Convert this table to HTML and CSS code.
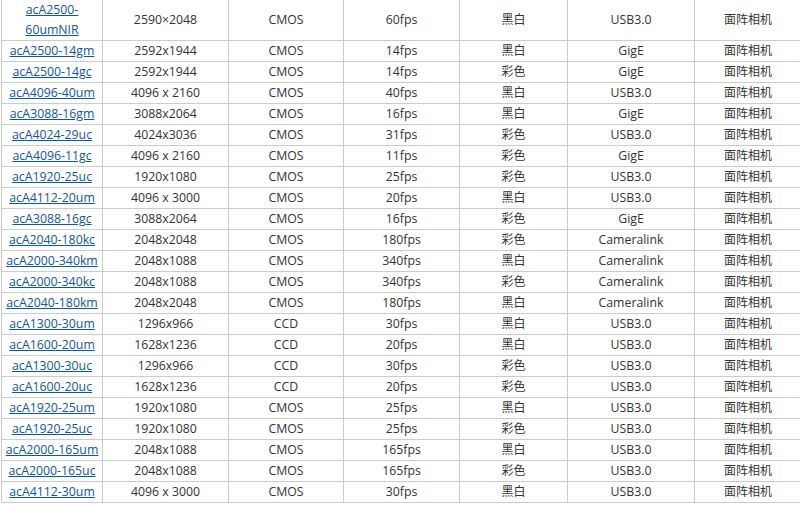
FILE: index.html
```html
<!DOCTYPE html>
<html lang="zh-CN">
<head>
<meta charset="utf-8">
<title>相机型号</title>
<link rel="stylesheet" href="styles.css">
</head>
<body>
<table class="spec">
<colgroup>
<col class="c1"><col class="c2"><col class="c3"><col class="c4"><col class="c5"><col class="c6"><col class="c7">
</colgroup>
<tbody>
<tr><td><a href="#">acA2500-60umNIR</a></td><td>2590×2048</td><td>CMOS</td><td>60fps</td><td class="zh">黑白</td><td>USB3.0</td><td class="zh">面阵相机</td></tr>
<tr><td><a href="#">acA2500-14gm</a></td><td>2592x1944</td><td>CMOS</td><td>14fps</td><td class="zh">黑白</td><td>GigE</td><td class="zh">面阵相机</td></tr>
<tr><td><a href="#">acA2500-14gc</a></td><td>2592x1944</td><td>CMOS</td><td>14fps</td><td class="zh">彩色</td><td>GigE</td><td class="zh">面阵相机</td></tr>
<tr><td><a href="#">acA4096-40um</a></td><td>4096 x 2160</td><td>CMOS</td><td>40fps</td><td class="zh">黑白</td><td>USB3.0</td><td class="zh">面阵相机</td></tr>
<tr><td><a href="#">acA3088-16gm</a></td><td>3088x2064</td><td>CMOS</td><td>16fps</td><td class="zh">黑白</td><td>GigE</td><td class="zh">面阵相机</td></tr>
<tr><td><a href="#">acA4024-29uc</a></td><td>4024x3036</td><td>CMOS</td><td>31fps</td><td class="zh">彩色</td><td>USB3.0</td><td class="zh">面阵相机</td></tr>
<tr><td><a href="#">acA4096-11gc</a></td><td>4096 x 2160</td><td>CMOS</td><td>11fps</td><td class="zh">彩色</td><td>GigE</td><td class="zh">面阵相机</td></tr>
<tr><td><a href="#">acA1920-25uc</a></td><td>1920x1080</td><td>CMOS</td><td>25fps</td><td class="zh">彩色</td><td>USB3.0</td><td class="zh">面阵相机</td></tr>
<tr><td><a href="#">acA4112-20um</a></td><td>4096 x 3000</td><td>CMOS</td><td>20fps</td><td class="zh">黑白</td><td>USB3.0</td><td class="zh">面阵相机</td></tr>
<tr><td><a href="#">acA3088-16gc</a></td><td>3088x2064</td><td>CMOS</td><td>16fps</td><td class="zh">彩色</td><td>GigE</td><td class="zh">面阵相机</td></tr>
<tr><td><a href="#">acA2040-180kc</a></td><td>2048x2048</td><td>CMOS</td><td>180fps</td><td class="zh">彩色</td><td>Cameralink</td><td class="zh">面阵相机</td></tr>
<tr><td><a href="#">acA2000-340km</a></td><td>2048x1088</td><td>CMOS</td><td>340fps</td><td class="zh">黑白</td><td>Cameralink</td><td class="zh">面阵相机</td></tr>
<tr><td><a href="#">acA2000-340kc</a></td><td>2048x1088</td><td>CMOS</td><td>340fps</td><td class="zh">彩色</td><td>Cameralink</td><td class="zh">面阵相机</td></tr>
<tr><td><a href="#">acA2040-180km</a></td><td>2048x2048</td><td>CMOS</td><td>180fps</td><td class="zh">黑白</td><td>Cameralink</td><td class="zh">面阵相机</td></tr>
<tr><td><a href="#">acA1300-30um</a></td><td>1296x966</td><td>CCD</td><td>30fps</td><td class="zh">黑白</td><td>USB3.0</td><td class="zh">面阵相机</td></tr>
<tr><td><a href="#">acA1600-20um</a></td><td>1628x1236</td><td>CCD</td><td>20fps</td><td class="zh">黑白</td><td>USB3.0</td><td class="zh">面阵相机</td></tr>
<tr><td><a href="#">acA1300-30uc</a></td><td>1296x966</td><td>CCD</td><td>30fps</td><td class="zh">彩色</td><td>USB3.0</td><td class="zh">面阵相机</td></tr>
<tr><td><a href="#">acA1600-20uc</a></td><td>1628x1236</td><td>CCD</td><td>20fps</td><td class="zh">彩色</td><td>USB3.0</td><td class="zh">面阵相机</td></tr>
<tr><td><a href="#">acA1920-25um</a></td><td>1920x1080</td><td>CMOS</td><td>25fps</td><td class="zh">黑白</td><td>USB3.0</td><td class="zh">面阵相机</td></tr>
<tr><td><a href="#">acA1920-25uc</a></td><td>1920x1080</td><td>CMOS</td><td>25fps</td><td class="zh">彩色</td><td>USB3.0</td><td class="zh">面阵相机</td></tr>
<tr><td><a href="#">acA2000-165um</a></td><td>2048x1088</td><td>CMOS</td><td>165fps</td><td class="zh">黑白</td><td>USB3.0</td><td class="zh">面阵相机</td></tr>
<tr><td><a href="#">acA2000-165uc</a></td><td>2048x1088</td><td>CMOS</td><td>165fps</td><td class="zh">彩色</td><td>USB3.0</td><td class="zh">面阵相机</td></tr>
<tr><td><a href="#">acA4112-30um</a></td><td>4096 x 3000</td><td>CMOS</td><td>30fps</td><td class="zh">黑白</td><td>USB3.0</td><td class="zh">面阵相机</td></tr>
</tbody>
</table>
</body>
</html>
```
FILE: styles.css
```css
html, body {
  margin: 0;
  padding: 0;
  background: #ffffff;
  overflow: hidden;
}
body {
  padding-left: 1px;
  font-family: "Open Sans", "Noto Sans CJK SC", sans-serif;
  font-size: 12.3px;
  color: #333333;
}
.spec {
  border-collapse: collapse;
  table-layout: fixed;
  width: 800px;
}
.spec td {
  border: 1px solid #cccccc;
  padding: 0 2px;
  line-height: 20px;
  text-align: center;
  vertical-align: middle;
}
.spec td.zh {
  font-size: 12px;
}
.spec tr:first-child td {
  border-top: none;
}
.spec a {
  color: #0b57a8;
  text-decoration: underline;
}
.c1 { width: 101px; }
.c2 { width: 126px; }
.c3 { width: 115px; }
.c4 { width: 116px; }
.c5 { width: 108px; }
.c6 { width: 127px; }
.c7 { width: 107px; }
```
